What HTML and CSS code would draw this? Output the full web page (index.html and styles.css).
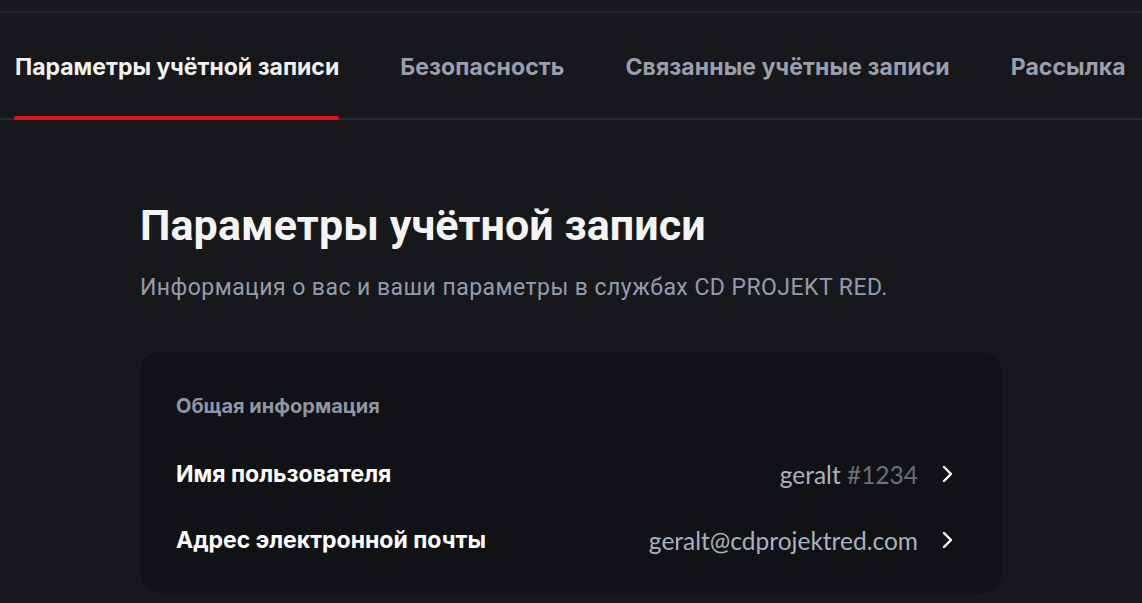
FILE: index.html
```html
<!DOCTYPE html>
<html>
  <head>
    <meta charset="UTF-8">
    <title>Параметры учётной записи</title>
    <link rel="stylesheet" href="styles.css">
  </head>
  <body>
    <div class="topbar"></div>
    <nav class="tabs">
      <a class="tab active">Параметры учётной записи</a>
      <a class="tab">Безопасность</a>
      <a class="tab">Связанные учётные записи</a>
      <a class="tab">Рассылка</a>
    </nav>

    <main class="content">
      <h1>Параметры учётной записи</h1>
      <p class="lead">Информация о вас и ваши параметры в службах CD PROJEKT RED.</p>

      <section class="card">
        <h2>Общая информация</h2>
        <div class="row">
          <span class="label">Имя пользователя</span>
          <span class="value">geralt <span class="tag">#1234</span></span>
          <svg class="chev" width="13" height="20" viewBox="0 0 13 20"><path d="M3 3l7 7-7 7" fill="none" stroke="#fff" stroke-width="2.4" stroke-linecap="round" stroke-linejoin="round"/></svg>
        </div>
        <div class="row">
          <span class="label">Адрес электронной почты</span>
          <span class="value">geralt@cdprojektred.com</span>
          <svg class="chev" width="13" height="20" viewBox="0 0 13 20"><path d="M3 3l7 7-7 7" fill="none" stroke="#fff" stroke-width="2.4" stroke-linecap="round" stroke-linejoin="round"/></svg>
        </div>
      </section>
    </main>
  </body>
</html>
```

FILE: styles.css
```css
html,body {
  margin:0;
  padding:0;
  background:#17181c;
  color:#fff;
  font-family:'Inter', sans-serif;
  overflow:hidden;
}

.topbar {
  height:11px;
  border-bottom:2px solid #25262b;
}

.tabs {
  display:flex;
  gap:61px;
  padding:3px 0 0 15px;
  height:107px;
  border-bottom:2px solid #2a2b30;
  box-sizing:border-box;
  white-space:nowrap;
}
.tab {
  position:relative;
  display:flex;
  align-items:center;
  font-size:23px;
  font-weight:700;
  letter-spacing:0.1px;
  color:#9a9fab;
  cursor:pointer;
}
.tab.active { color:#f2f2f2; letter-spacing:0; }
.tab.active:after {
  content:'';
  position:absolute;
  left:-1px;
  right:0;
  bottom:-2px;
  height:4px;
  border-radius:2px;
  background:#e0141b;
}

.content {
  padding:80px 0 0 140px;
  width:862px;
}

h1 {
  margin:0;
  font-family:'Roboto', sans-serif;
  font-size:43px;
  font-weight:700;
  letter-spacing:0.1px;
  color:#f4f4f5;
  line-height:50px;
}
.lead {
  margin:23px 0 0;
  font-family:'Roboto', sans-serif;
  font-size:23px;
  letter-spacing:0.45px;
  color:#949cab;
  line-height:30px;
}

.card {
  margin-top:49px;
  background:#111215;
  border-radius:20px;
  padding:40px 36px 20px;
}
.card h2 {
  margin:0 0 21px;
  font-size:20px;
  font-weight:700;
  color:#8f96a3;
  line-height:28px;
}

.row {
  display:flex;
  align-items:center;
  height:66px;
}
.label {
  flex:1;
  font-size:23px;
  font-weight:700;
  color:#fff;
}
.value {
  font-family:'Lato', sans-serif;
  font-size:24.5px;
  color:#a9b1bf;
}
.tag { color:#6c6f76; }
.chev { margin-left:23px; margin-right:12px; }
```
